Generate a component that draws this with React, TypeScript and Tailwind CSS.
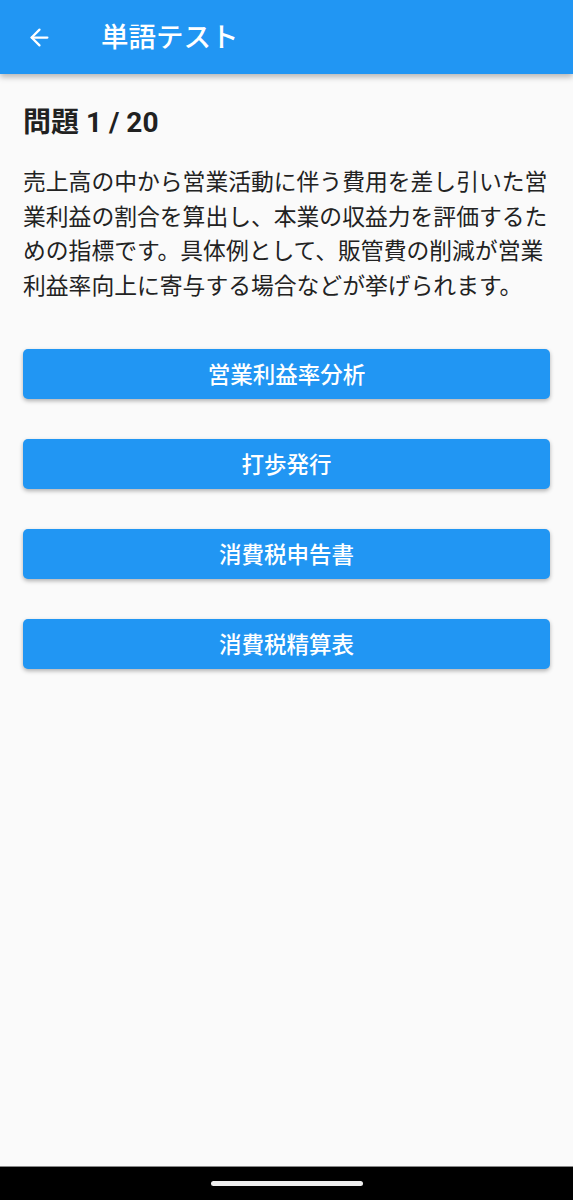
import { ArrowLeft } from 'lucide-react';

const choices = ['営業利益率分析', '打歩発行', '消費税申告書', '消費税精算表'];

export default function App() {
  return (
    <div
      className="flex flex-col h-[1200px] bg-[#fafafa] text-[#212121]"
      style={{ fontFamily: 'Roboto, "Noto Sans CJK JP", sans-serif' }}
    >
      {/* App bar */}
      <header className="h-[74px] flex items-center bg-[#2196f3] text-white shadow-[0_3px_6px_rgba(0,0,0,0.28)] z-10 shrink-0">
        <button className="w-[40px] ml-[19px] flex items-center justify-center" aria-label="Back">
          <ArrowLeft className="w-[27px] h-[27px]" strokeWidth={2} />
        </button>
        <h1 className="ml-[42px] text-[27.5px] font-medium leading-none pt-[2px]">単語テスト</h1>
      </header>

      {/* Question */}
      <main className="flex-1 px-[23px] pt-[31px]">
        <h2 className="text-[28px] font-bold leading-[36px]">問題 1 / 20</h2>
        <p className="mt-[25px] text-[22.8px] leading-[34.5px] text-[#222]">
          売上高の中から営業活動に伴う費用を差し引いた営業利益の割合を算出し、本業の収益力を評価するための指標です。具体例として、販管費の削減が営業利益率向上に寄与する場合などが挙げられます。
        </p>

        <div className="mt-[45px] flex flex-col gap-[40px]">
          {choices.map((c) => (
            <button
              key={c}
              className="h-[50px] w-full rounded-[5px] bg-[#2196f3] text-white text-[22.5px] font-medium pt-[3px] shadow-[0_2px_4px_rgba(0,0,0,0.3)]"
            >
              {c}
            </button>
          ))}
        </div>
      </main>

      {/* System nav */}
      <div className="h-[34px] shrink-0 bg-black border-t border-[#888] flex items-center justify-center">
        <div className="w-[152px] h-[5px] rounded-full bg-[#eee]" />
      </div>
    </div>
  );
}
